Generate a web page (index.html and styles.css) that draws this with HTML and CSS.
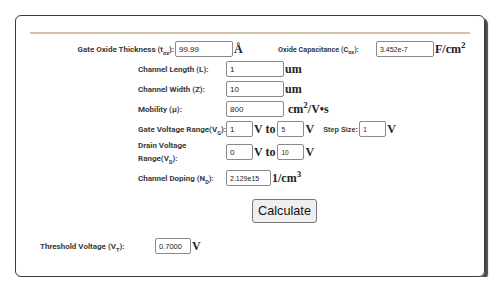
FILE: index.html
```html
<!DOCTYPE HTML>
<html>
<head>
<link rel="stylesheet" href="styles.css">
</head>
<body>
<div class="card">
    <div class="rule"></div>
    <form id="mos_form">
        <div class="row top">
            <label class="label wide">Gate Oxide Thickness (t<sub>ox</sub>):</label>
            <input type="text" class="field" value="99.99">
            <span class="unit angstrom">Å</span>
            <label class="label cox">Oxide Capacitance (C<sub>ox</sub>):</label>
            <input type="text" class="field small-text" value="3.452e-7">
            <span class="unit">F/cm<sup>2</sup></span>
        </div>
        <div class="row">
            <label class="label">Channel Length (L):</label>
            <input type="text" class="field" value="1">
            <span class="unit">um</span>
        </div>
        <div class="row">
            <label class="label">Channel Width (Z):</label>
            <input type="text" class="field" value="10">
            <span class="unit">um</span>
        </div>
        <div class="row">
            <label class="label">Mobility (μ):</label>
            <input type="text" class="field" value="800">
            <span class="unit spaced">cm<sup>2</sup>/V•s</span>
        </div>
        <div class="row">
            <label class="label">Gate Voltage Range(V<sub>G</sub>):</label>
            <input type="text" class="field short" value="1">
            <span class="unit">V to</span>
            <input type="text" class="field short tiny-text next" value="5">
            <span class="unit">V</span>
            <label class="step">Step Size:</label>
            <input type="text" class="field short tiny-text" value="1">
            <span class="unit">V</span>
        </div>
        <div class="row double">
            <label class="label">Drain Voltage<br>Range(V<sub>D</sub>):</label>
            <input type="text" class="field short" value="0">
            <span class="unit">V to</span>
            <input type="text" class="field short tiny-text next" value="10">
            <span class="unit">V</span>
        </div>
        <div class="row doping">
            <label class="label">Channel Doping (N<sub>D</sub>):</label>
            <input type="text" class="field mid small-text" value="2.129e15">
            <span class="unit">1/cm<sup>3</sup></span>
        </div>
        <button type="button" class="calc">Calculate</button>
        <div class="row result">
            <label class="label result-label">Threshold Voltage (V<sub>T</sub>):</label>
            <input type="text" class="field result-field" value="0.7000" readonly>
            <span class="unit">V</span>
        </div>
    </form>
</div>
</body>
</html>
```

FILE: styles.css
```css
body {
    margin: 0;
    padding: 15px 0 0 0;
    background: #fff;
    font-family: "Liberation Sans", Arial, sans-serif;
    color: #333;
}

.card {
    box-sizing: border-box;
    width: 470px;
    height: 262px;
    margin-left: 15px;
    padding: 16px 14px 0 14px;
    border: 1px solid #3a3a3a;
    border-radius: 6px;
    box-shadow: 3px 3px 1px #4a4a4a;
}

.rule {
    height: 2px;
    background: #d4c2a6;
    margin-bottom: 5px;
}

.row {
    display: flex;
    align-items: center;
    height: 20px;
    padding-left: 108px;
}

.row.top {
    padding-left: 0;
}

.row.double {
    height: 26px;
}

.row.doping {
    margin-top: 3px;
}

.label {
    width: 88px;
    flex: none;
    font-family: Roboto, "Liberation Sans", sans-serif;
    font-size: 8px;
    font-weight: bold;
    line-height: 13px;
    white-space: nowrap;
    color: #3a3a3a;
}

.label sub {
    font-size: 5.5px;
    line-height: 0;
}

.label.wide {
    width: 145px;
    padding-right: 1px;
    box-sizing: border-box;
    text-align: right;
}

.label.cox {
    width: 98px;
    font-size: 7.3px;
}

.field {
    box-sizing: border-box;
    width: 58px;
    height: 16px;
    flex: none;
    margin: 0;
    padding: 0 0 0 3px;
    border: 1px solid #8a8a8a;
    border-radius: 2px;
    font-family: "Liberation Sans", Arial, sans-serif;
    font-size: 8px;
    color: #222;
    background: #fff;
}

.field.short {
    width: 27px;
}

.field.mid {
    width: 45px;
}

.field.next {
    margin-left: 2px;
}

.small-text {
    font-size: 7px;
}

.tiny-text {
    font-size: 6.5px;
}

.unit {
    flex: none;
    margin-left: 1px;
    font-family: "Liberation Serif", "Times New Roman", serif;
    font-weight: bold;
    font-size: 12px;
    line-height: 1;
    color: #222;
}

.unit sup {
    font-size: 9px;
    line-height: 0;
}

.unit.angstrom {
    width: 44px;
}

.unit.spaced {
    margin-left: 4px;
}

.step {
    flex: none;
    margin-left: 9px;
    width: 36px;
    font-size: 7.3px;
    font-weight: bold;
    white-space: nowrap;
    color: #3a3a3a;
}

.calc {
    display: block;
    width: 65px;
    height: 24px;
    margin: 11px 0 0 222px;
    padding: 0;
    background: #efefef;
    border: 1px solid #767676;
    border-radius: 3px;
    font-family: "Liberation Sans", Arial, sans-serif;
    font-size: 12.7px;
    color: #111;
}

.row.result {
    margin-top: 13px;
    padding-left: 10px;
}

.result-label {
    width: 115px;
}

.result-field {
    width: 36px;
    font-size: 7.5px;
}
```
